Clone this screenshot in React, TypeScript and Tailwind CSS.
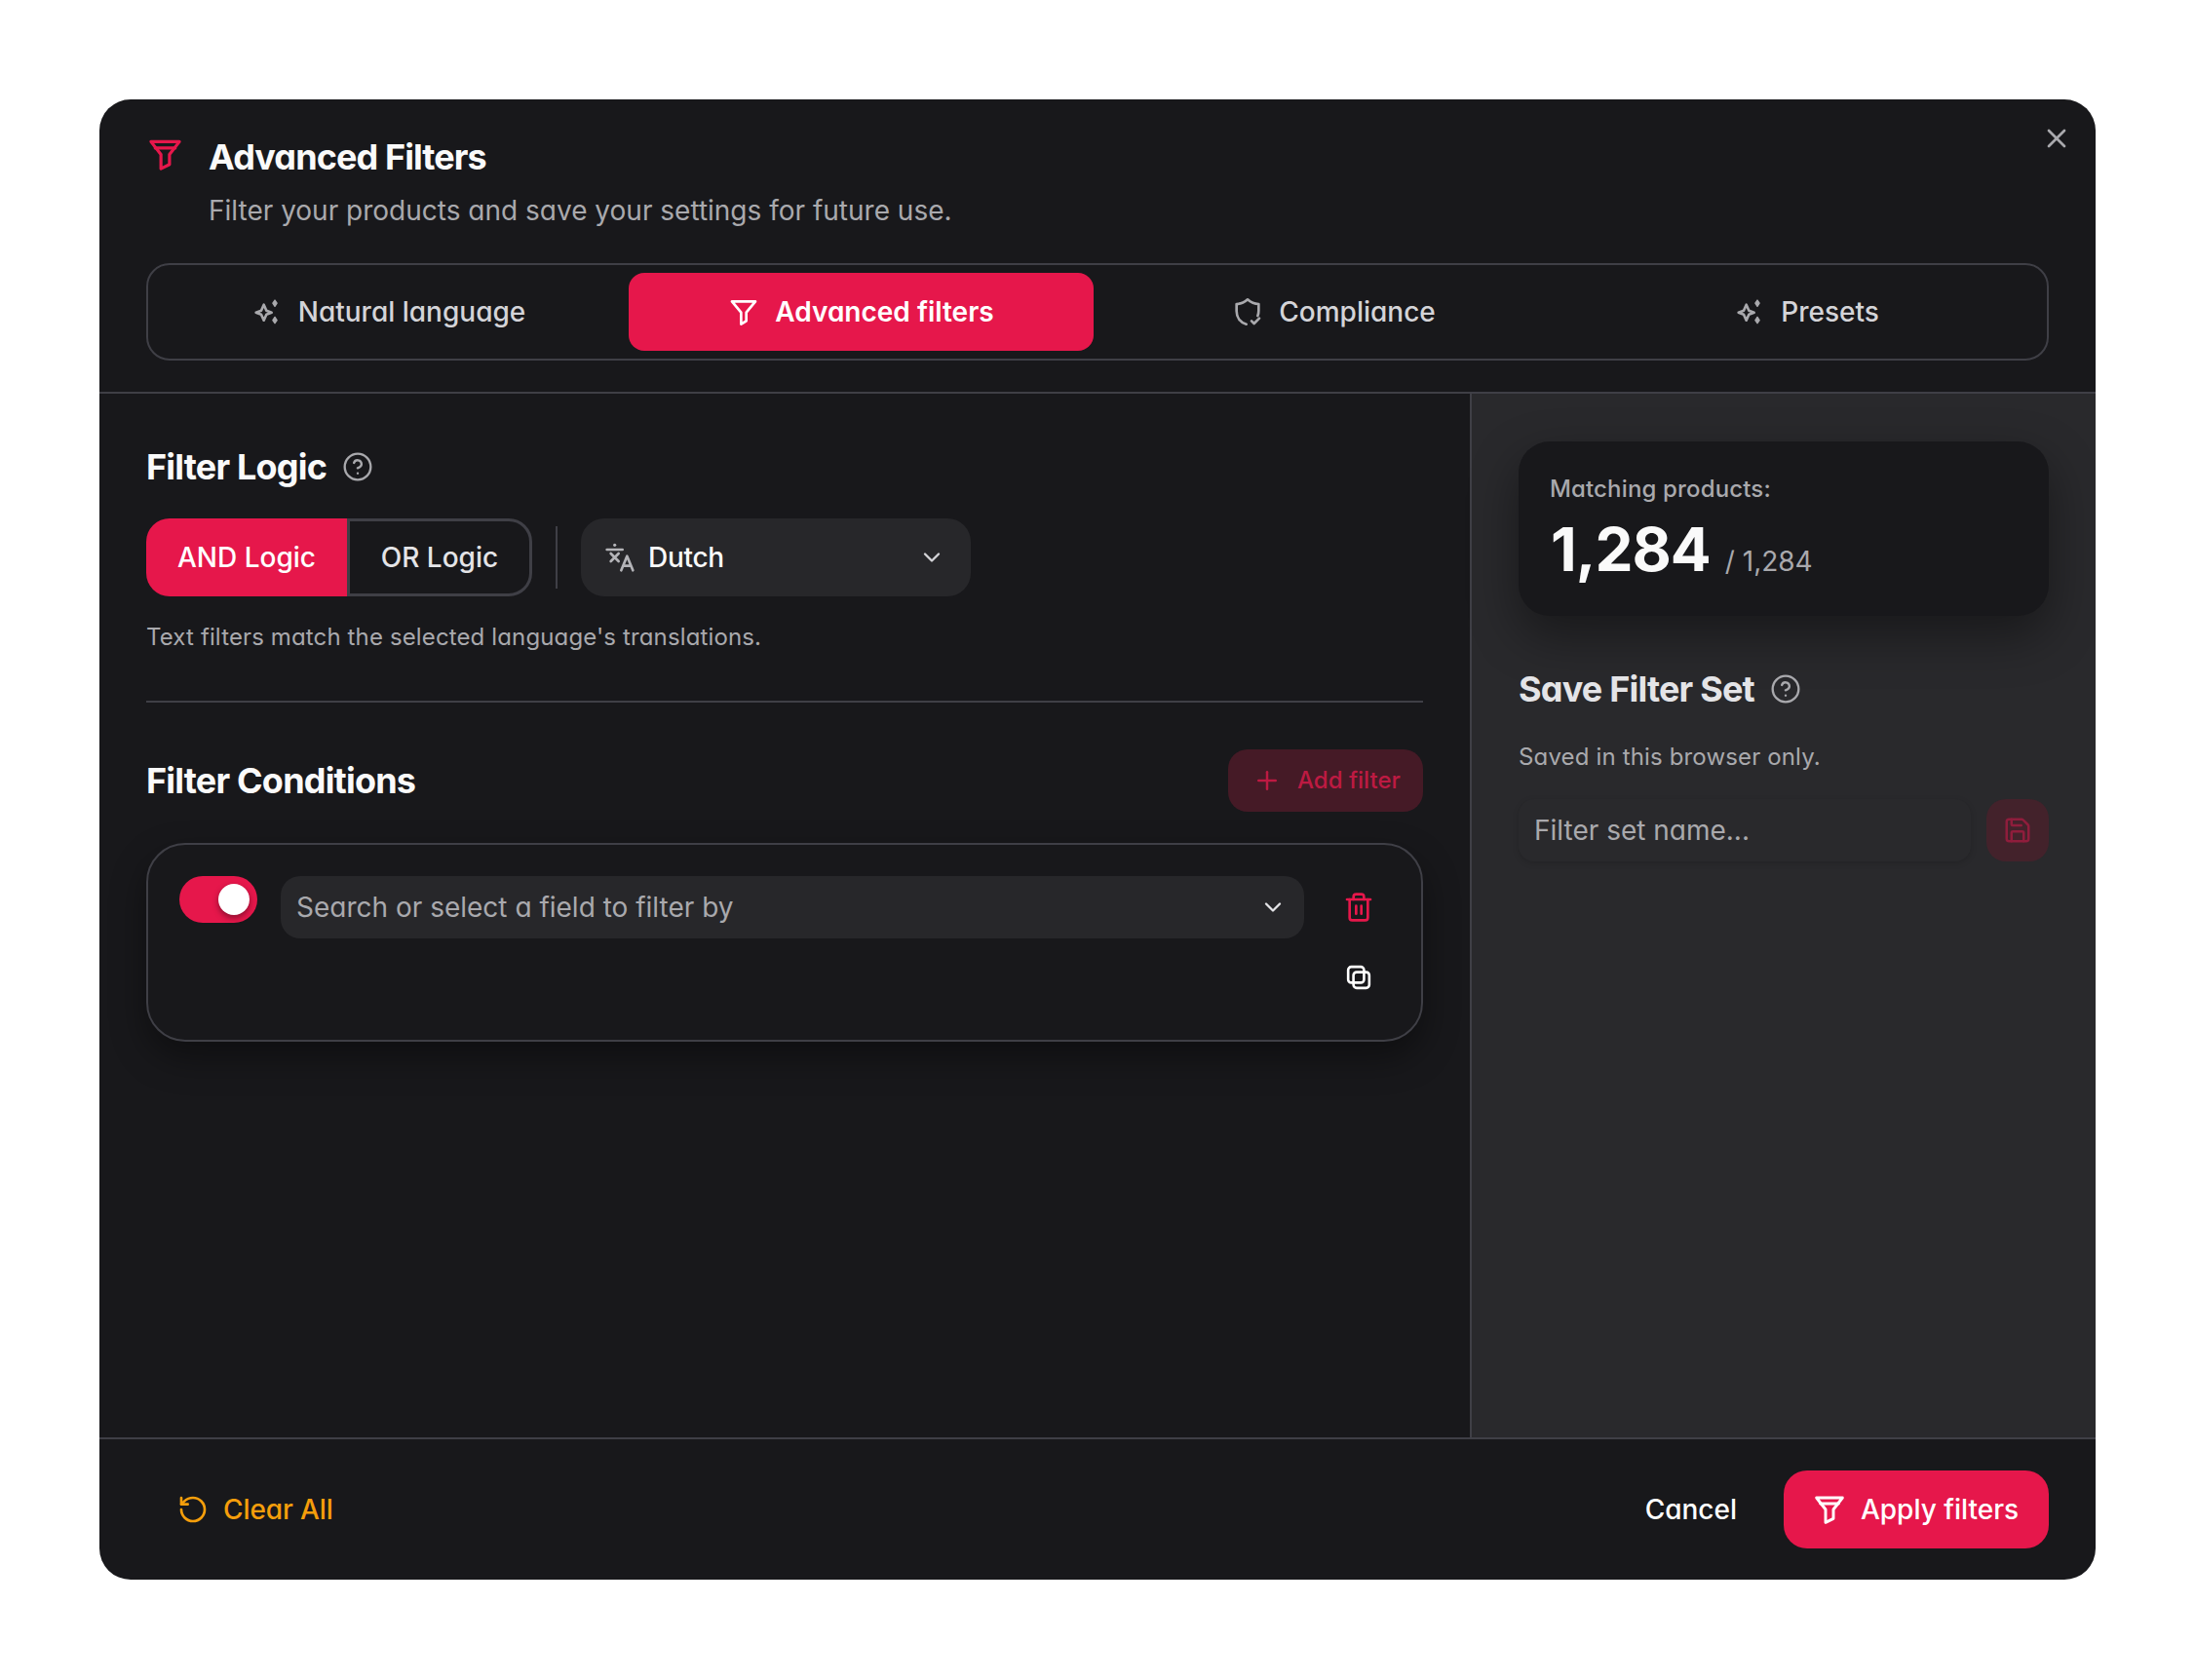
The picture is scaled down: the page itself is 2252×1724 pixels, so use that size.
import { ChevronDown, CircleHelp, Plus, RotateCcw, Save, Trash2, X } from "lucide-react"

function FunnelBand({ className }: { className?: string }) {
  return (
    <svg viewBox="0 0 24 24" fill="none" stroke="currentColor" strokeWidth="2.2" strokeLinejoin="round" strokeLinecap="round" className={className}>
      <path d="M2 3h20l-7 9v7l-6 3V12z" />
      <path d="M5 7.500h14" />
    </svg>
  )
}

function FunnelPlain({ className }: { className?: string }) {
  return (
    <svg viewBox="0 0 24 24" fill="none" stroke="currentColor" strokeWidth="2" strokeLinejoin="round" strokeLinecap="round" className={className}>
      <path d="M3 4h18l-7 8.500V19l-4 2.500v-9z" />
    </svg>
  )
}

function Sparkle({ className }: { className?: string }) {
  return (
    <svg viewBox="0 0 24 24" fill="none" stroke="currentColor" strokeWidth="2" strokeLinejoin="round" className={className}>
      <path d="M9.500 6.500 11.500 11l4 1.500-4 1.500-2 4.500-2-4.500-4-1.500 4-1.500z" />
      <path d="M18 3l1.600 2.400L18 7.800l-1.600-2.400z" fill="currentColor" strokeWidth="1" />
      <path d="M18 16l1.600 2.400-1.600 2.400-1.600-2.400z" fill="currentColor" strokeWidth="1" />
    </svg>
  )
}

function ShieldTick({ className }: { className?: string }) {
  return (
    <svg viewBox="0 0 24 24" fill="none" stroke="currentColor" strokeWidth="2" strokeLinejoin="round" strokeLinecap="round" className={className}>
      <path d="M11 21.500c-4.500-1.300-7.500-5-7.500-10V6c3.500 0 6-1.200 8.500-3.500C14.500 4.800 17 6 20.500 6v5c0 1.500-.2 2.800-.7 4" />
      <path d="M15 19l2 2 4-4" />
    </svg>
  )
}

function Translate({ className }: { className?: string }) {
  return (
    <svg viewBox="0 0 24 24" fill="none" stroke="currentColor" strokeWidth="2" strokeLinecap="round" strokeLinejoin="round" className={className}>
      <circle cx="8" cy="2.500" r="1.200" fill="currentColor" stroke="none" />
      <path d="M2 6h12" />
      <path d="M5 9l6 6M11 9l-6 6" />
      <path d="M13 22l4.500-11L22 22M14.500 18.500h6" />
    </svg>
  )
}

function CopyBoxes({ className }: { className?: string }) {
  return (
    <svg viewBox="0 0 24 24" fill="none" stroke="currentColor" strokeWidth="2.400" className={className}>
      <rect x="2" y="2" width="15" height="15" rx="3" />
      <rect x="7" y="7" width="15" height="15" rx="3" />
    </svg>
  )
}

const tabs = [
  { label: "Natural language", icon: Sparkle },
  { label: "Advanced filters", icon: FunnelPlain, active: true },
  { label: "Compliance", icon: ShieldTick },
  { label: "Presets", icon: Sparkle },
]

export default function App() {
  return (
    <div className="min-h-screen bg-white pt-[102px] pl-[102px] [font-family:Inter,sans-serif] [font-feature-settings:'cv11'] text-[#fafafa]">
      <div className="relative flex h-[1519px] w-[2048px] flex-col overflow-hidden rounded-[32px] bg-[#18181b]">
        <button className="absolute top-[24px] right-[24px] text-[#a9a9ad]">
          <X className="h-[32px] w-[32px]" strokeWidth={2} />
        </button>

        {/* header */}
        <div className="h-[302px] shrink-0 border-b-2 border-[#3f3f46] px-[48px] pt-[37px]">
          <div className="flex items-center gap-[27px]">
            <FunnelBand className="ml-[2px] h-[35px] w-[35px] -translate-y-[3px] text-[#e6174b]" />
            <h2 className="text-[36px] leading-[44px] font-bold tracking-[-0.9px]">Advanced Filters</h2>
          </div>
          <p className="mt-[11px] ml-[64px] text-[28px] leading-[44px] text-[#a9a9ad]">Filter your products and save your settings for future use.</p>
          <div className="mt-[32px] flex h-[100px] gap-[8px] rounded-[24px] border-2 border-[#3f3f46] p-[8px]">
            {tabs.map((tab) => {
              const Icon = tab.icon
              return (
                <button
                  key={tab.label}
                  className={
                    tab.active
                      ? "flex flex-1 items-center justify-center gap-[16px] rounded-[16px] bg-[#e6174b] text-[28px] font-semibold text-white"
                      : "flex flex-1 items-center justify-center gap-[16px] rounded-[16px] text-[28px] font-medium text-[#d4d4d8]"
                  }
                >
                  <Icon className={tab.active ? "h-[32px] w-[32px] text-white" : "h-[32px] w-[32px] text-[#a9a9ad]"} />
                  {tab.label}
                </button>
              )
            })}
          </div>
        </div>

        {/* body */}
        <div className="flex min-h-0 flex-1">
          <div className="w-[1408px] shrink-0 border-r-2 border-[#3f3f46] px-[48px] pt-[53px]">
            <div className="flex h-[44px] items-center gap-[16px]">
              <h3 className="text-[36px] font-bold tracking-[-0.8px]">Filter Logic</h3>
              <CircleHelp className="h-[32px] w-[32px] text-[#a9a9ad]" strokeWidth={1.75} />
            </div>
            <div className="mt-[31px] flex h-[80px] items-center">
              <button className="h-full w-[206px] rounded-l-[24px] bg-[#e6174b] text-[28px] font-medium text-white">AND Logic</button>
              <button className="h-full w-[190px] rounded-r-[24px] border-[3px] border-[#3f3f46] text-[28px] font-medium text-[#e4e4e7]">OR Logic</button>
              <div className="mx-[24px] h-[64px] w-[2px] bg-[#3f3f46]" />
              <div className="flex h-full w-[400px] items-center rounded-[24px] bg-[#27272a] pr-[26px] pl-[24px]">
                <Translate className="h-[32px] w-[32px] text-[#b4b4b8]" />
                <span className="ml-[13px] flex-1 text-[28px] font-medium tracking-[-0.3px] text-[#fafafa]">Dutch</span>
                <ChevronDown className="h-[28px] w-[28px] text-[#d4d4d8]" strokeWidth={2} />
              </div>
            </div>
            <p className="mt-[22px] text-[24px] leading-[40px] tracking-[0.13px] text-[#a9a9ad]">Text filters match the selected language's translations.</p>
            <div className="mt-[45px] h-[2px] bg-[#3f3f46]" />

            <div className="mt-[48px] flex h-[64px] items-center justify-between">
              <h3 className="text-[36px] font-bold tracking-[-0.8px]">Filter Conditions</h3>
              <button className="flex h-full w-[200px] items-center gap-[16px] rounded-[20px] bg-[#451a26] pl-[25px] text-[24px] font-medium text-[#bd1a42]">
                <Plus className="h-[30px] w-[30px]" strokeWidth={2} />
                Add filter
              </button>
            </div>

            <div className="mt-[32px] flex gap-[24px] rounded-[40px] border-2 border-[#3f3f46] bg-[#18181b] p-[32px] shadow-[0_16px_36px_rgba(0,0,0,0.4)]">
              <div className="flex h-[48px] w-[80px] shrink-0 items-center justify-end rounded-full bg-[#e6174b] pr-[8px]">
                <div className="h-[32px] w-[32px] rounded-full bg-white shadow-[0_3px_6px_rgba(0,0,0,0.4)]" />
              </div>
              <div className="flex h-[64px] flex-1 items-center justify-between rounded-[20px] bg-[#27272a] pr-[18px] pl-[16px]">
                <span className="text-[28px] text-[#a9a9ad]">Search or select a field to filter by</span>
                <ChevronDown className="h-[28px] w-[28px] text-[#e4e4e7]" strokeWidth={2} />
              </div>
              <div className="flex w-[64px] shrink-0 flex-col gap-[8px]">
                <button className="flex h-[64px] items-center justify-center text-[#e6174b]">
                  <Trash2 className="h-[32px] w-[32px]" strokeWidth={2} />
                </button>
                <button className="flex h-[64px] items-center justify-center text-white">
                  <CopyBoxes className="h-[26px] w-[26px]" />
                </button>
              </div>
            </div>
          </div>

          {/* sidebar */}
          <div className="flex-1 bg-[#29292c] px-[48px] pt-[49px]">
            <div className="h-[179px] rounded-[32px] bg-[#18181b] px-[32px] pt-[29px] shadow-[0_20px_50px_rgba(0,0,0,0.4)]">
              <p className="text-[24px] leading-[40px] font-medium tracking-[0.15px] text-[#a9a9ad]">Matching products:</p>
              <div className="mt-[6px] ml-[1px] flex items-baseline gap-[15px]">
                <span className="text-[62px] leading-[72px] font-bold tracking-[-1px]">1,284</span>
                <span className="text-[28px] text-[#a9a9ad]">/ 1,284</span>
              </div>
            </div>
            <div className="mt-[53px] flex h-[44px] items-center gap-[16px]">
              <h3 className="text-[36px] font-bold tracking-[-0.8px] text-[#e4e4e7]">Save Filter Set</h3>
              <CircleHelp className="h-[32px] w-[32px] text-[#a9a9ad]" strokeWidth={1.75} />
            </div>
            <p className="mt-[28px] text-[24px] leading-[40px] tracking-[0.15px] text-[#a9a9ad]">Saved in this browser only.</p>
            <div className="mt-[23px] flex gap-[16px]">
              <div className="flex h-[64px] flex-1 items-center rounded-[16px] bg-[#29292c] pl-[16px] text-[28px] text-[#a9a9ad] shadow-[0_2px_6px_rgba(0,0,0,0.15)]">Filter set name...</div>
              <button className="flex h-[64px] w-[64px] items-center justify-center rounded-[20px] bg-[#43222b] text-[#8f1d3c]">
                <Save className="h-[30px] w-[30px]" strokeWidth={2} />
              </button>
            </div>
          </div>
        </div>

        {/* footer */}
        <div className="flex h-[146px] shrink-0 items-center justify-between border-t-2 border-[#3f3f46] pr-[48px] pl-[80px]">
          <button className="flex items-center gap-[15px] text-[28px] font-medium tracking-[-0.1px] text-[#f59e0b]">
            <RotateCcw className="h-[32px] w-[32px]" strokeWidth={2} />
            Clear All
          </button>
          <div className="flex items-center gap-[48px]">
            <button className="text-[28px] font-medium text-white">Cancel</button>
            <button className="flex h-[80px] w-[272px] items-center justify-center gap-[16px] rounded-[24px] bg-[#e6174b] text-[28px] font-medium text-white">
              <FunnelBand className="h-[32px] w-[32px]" />
              Apply filters
            </button>
          </div>
        </div>
      </div>
    </div>
  )
}
